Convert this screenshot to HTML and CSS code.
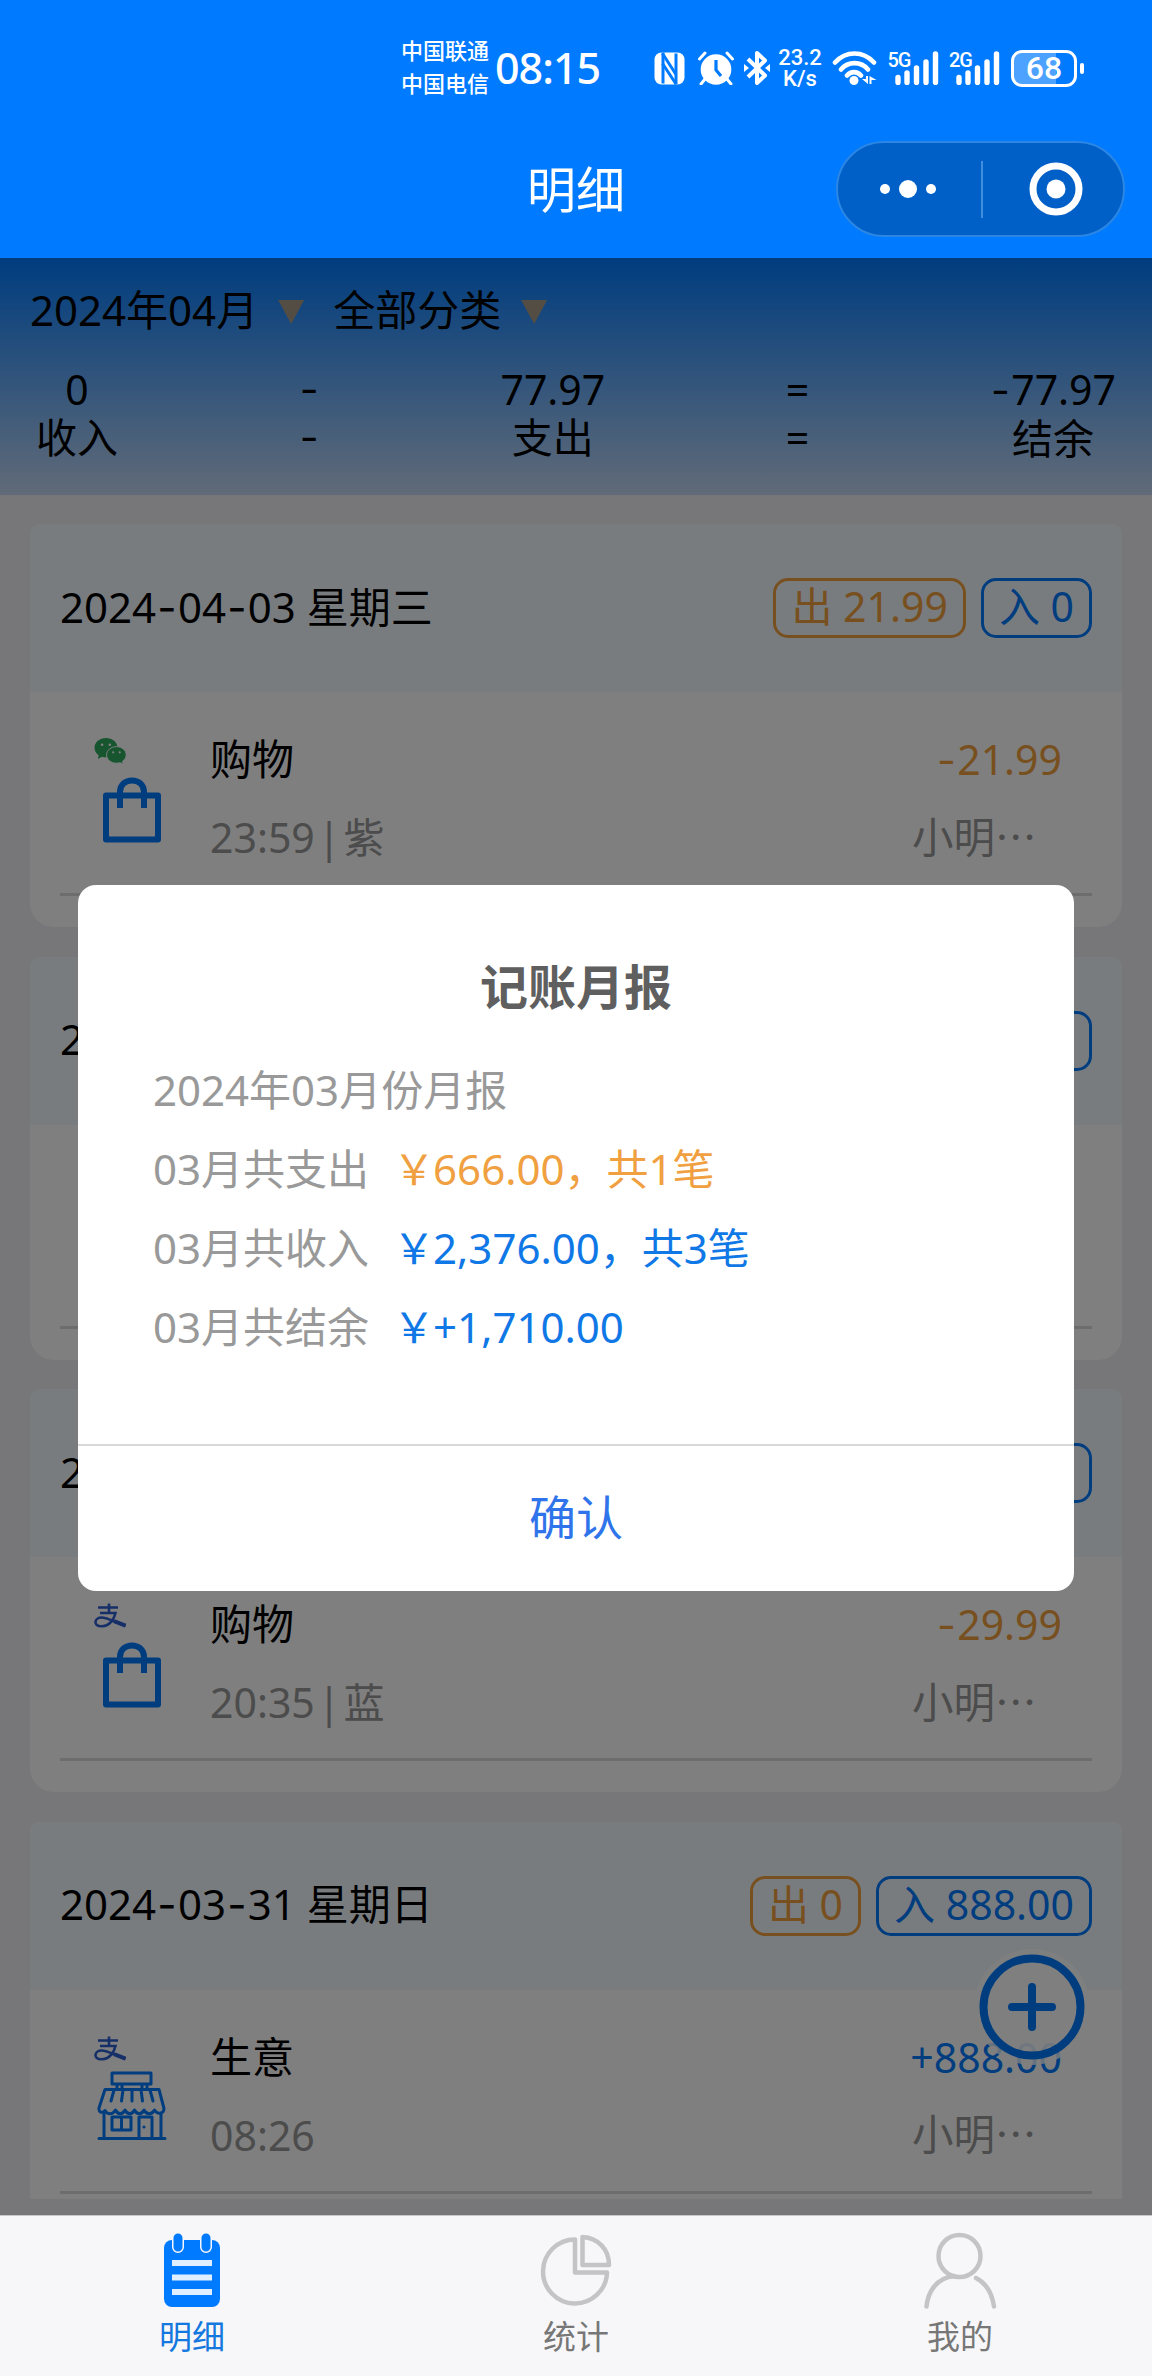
FILE: index.html
```html
<!DOCTYPE html>
<html lang="zh-CN">
<head>
<meta charset="utf-8">
<title>明细</title>
<link rel="stylesheet" href="styles.css">
</head>
<body>
<svg class="defs" width="0" height="0" aria-hidden="true">
  <symbol id="wechat" viewBox="0 0 32 26">
    <path fill="#2fab5f" d="M11.5 0C5 0 0 4.300 0 9.700c0 3 1.600 5.700 4.200 7.500L3.300 21l4.200-2.300c1.300.4 2.600.5 4 .5C18 19.200 23 15 23 9.700S18 0 11.500 0z"/>
    <path fill="#2fab5f" stroke="#fff" stroke-width="1" d="M22 8.600c-5.500 0-9.900 3.700-9.900 8.300s4.400 8.300 9.900 8.300c1.300 0 2.500-.2 3.600-.5l3.200 1.600-.8-3c2.200-1.500 3.700-3.800 3.700-6.400 0-4.600-4.300-8.300-9.700-8.300z"/>
    <g fill="#fff"><circle cx="7.600" cy="6.800" r="1.300"/><circle cx="15.300" cy="6.800" r="1.300"/><circle cx="18.700" cy="14.300" r="1.100"/><circle cx="25.200" cy="14.300" r="1.100"/></g>
  </symbol>
  <symbol id="alipay" viewBox="0 0 33 26">
    <g fill="none" stroke="#2f5fd0" stroke-width="2.600">
      <path d="M4 4.500h20M15 .5V10M6 10h15.500c-1.200 5-5 13-13.500 13.300C3 23.500 1.300 21 1.500 18.800c.3-2.500 2.800-4.300 6-4.300 6 0 12 4 24 8.500"/>
      <path stroke-width="4" d="M20 18.200l11.500 4.500"/>
    </g>
  </symbol>
  <symbol id="bag" viewBox="0 0 70 70">
    <g fill="none" stroke="#007aff" stroke-width="6" stroke-linejoin="round">
      <path d="M9 22.500h52v44H9zM23 35V19c0-15.500 24-15.500 24 0v16"/>
    </g>
  </symbol>
  <symbol id="shop" viewBox="0 0 70 70">
    <g fill="none" stroke="#007aff" stroke-width="3" stroke-linejoin="round" stroke-linecap="round">
      <path d="M15 2h39v11H15zM20 13v5M25 13v5M45 13v5M50 13v5M8 18.500h54l5 19c0 5-6 7-9.500 1.500-2.500 5-8 5-10.500 0-2.500 5-7 5-9.500 0-2.500 5-7 5-9.500 0-2.500 5-7 5-9.500 0C15.500 44 10.500 44 8 39.500 5 43 1.500 41 2 37z"/>
      <path d="M17 19l-3 11M26 19l-1.500 11M35 19v11M44 19l1.500 11M53 19l3 11M7 42v24M64 42v24M2 67.500h66M15 46h19v13H15zM24.500 46v13M42 67V46h13v21"/>
    </g>
    <circle cx="47" cy="56" r="1.600" fill="#007aff"/>
  </symbol>
  <symbol id="bars" viewBox="0 0 44 34">
    <g fill="none" stroke="#fff" stroke-width="5.400" stroke-linecap="round"><path d="M3 26.500v5M12 22v9.500M21.500 17v14.500M31 11v20.500M40.500 3v28.500"/></g>
  </symbol>
</svg>

<header class="header">
  <div class="status">
    <div class="carriers"><span>中国联通</span><span>中国电信</span></div>
    <div class="clock">08:15</div>
    <div class="status-icons">
      <svg class="nfc" width="31" height="33" viewBox="0 0 31 33"><rect x=".5" y=".5" width="30" height="32" rx="7" fill="#fff"/><path d="M9 .5v31M22 1.500v31" stroke="#007aff" stroke-width="3"/><path d="M8.500 1.500l13.500 21M8.500 11.500l13.500 20.500" stroke="#007aff" stroke-width="3"/></svg>
      <svg class="alarm" width="36" height="34" viewBox="0 0 36 34"><circle cx="18" cy="18.500" r="15.300" fill="#fff"/><path d="M18 9v10l5 6" fill="none" stroke="#007aff" stroke-width="3.200"/><path d="M1.500 8l5.500-6M34.500 8L29 2M7 28l-4 5M29 28l4 5" stroke="#fff" stroke-width="3" stroke-linecap="round"/></svg>
      <svg class="bt" width="26" height="34" viewBox="0 0 26 34"><path d="M4 8l17 16.500-8 7.500V2l8 7.500L4 26" fill="none" stroke="#fff" stroke-width="4" stroke-linejoin="round"/><path d="M0 13l5 4-5 4zM26 13l-5 4 5 4z" fill="#fff"/></svg>
      <div class="speed"><span>23.2</span><span>K/s</span></div>
      <svg class="wifi" width="45" height="34" viewBox="0 0 45 34"><g fill="none" stroke="#fff" stroke-width="4.600" stroke-linecap="round"><path d="M3 11.500C14-.5 31-.5 42 11.500M9 18.500c7-8.500 20-8.500 27 0M15 24.500c4-4.500 10-4.500 14 0"/></g><circle cx="22" cy="29.500" r="4.500" fill="#fff"/><path d="M36 25v8l-6-5h4v-3zM37.500 25v8h2v-4h5z" fill="#fff"/></svg>
      <div class="signal"><span>5G</span><svg width="44" height="34"><use href="#bars"/></svg></div>
      <div class="signal"><span>2G</span><svg width="44" height="34"><use href="#bars"/></svg></div>
      <div class="battery"><span>68</span></div>
      <div class="battery-cap"></div>
    </div>
  </div>
  <div class="navbar">
    <h1 class="nav-title">明细</h1>
    <div class="capsule">
      <svg width="143" height="92" viewBox="0 0 143 92"><g fill="#fff"><circle cx="47" cy="46" r="5"/><circle cx="70" cy="46" r="9"/><circle cx="93" cy="46" r="5"/></g></svg>
      <div class="capsule-line"></div>
      <svg width="140" height="92" viewBox="0 0 140 92"><circle cx="73" cy="46" r="23" fill="none" stroke="#fff" stroke-width="7"/><circle cx="73" cy="46" r="9.500" fill="#fff"/></svg>
    </div>
  </div>
</header>

<main class="page">
  <section class="summary">
    <div class="filters">
      <span>2024年04月</span><i class="caret"></i>
      <span>全部分类</span><i class="caret"></i>
    </div>
    <div class="totals">
      <div><span>0</span><span>收入</span></div>
      <div><span class="dash">-</span><span class="dash">-</span></div>
      <div><span>77.97</span><span>支出</span></div>
      <div><span>=</span><span>=</span></div>
      <div><span><b class="dash">-</b>77.97</span><span>结余</span></div>
    </div>
  </section>

  <section class="days">
    <article class="card">
      <div class="card-head">
        <h2>2024<b class="dash">-</b>04<b class="dash">-</b>03 星期三</h2>
        <span class="badge out">出 21.99</span><span class="badge in">入 0</span>
      </div>
      <div class="item">
        <div class="icons"><svg class="source"><use href="#wechat"/></svg><svg class="category"><use href="#bag"/></svg></div>
        <div class="info"><span class="kind">购物</span><span class="note">23:59<i class="bar">|</i>紫</span></div>
        <div class="amount"><span class="neg"><b class="dash">-</b>21.99</span><span class="note member">小明…</span></div>
      </div>
    </article>

    <article class="card">
      <div class="card-head">
        <h2>2024<b class="dash">-</b>04<b class="dash">-</b>02</h2>
        <span class="badge in">入 0</span>
      </div>
      <div class="item"></div>
    </article>

    <article class="card">
      <div class="card-head">
        <h2>2024<b class="dash">-</b>04<b class="dash">-</b>01</h2>
        <span class="badge in">入 0</span>
      </div>
      <div class="item">
        <div class="icons"><svg class="source"><use href="#alipay"/></svg><svg class="category"><use href="#bag"/></svg></div>
        <div class="info"><span class="kind">购物</span><span class="note">20:35<i class="bar">|</i>蓝</span></div>
        <div class="amount"><span class="neg"><b class="dash">-</b>29.99</span><span class="note member">小明…</span></div>
      </div>
    </article>

    <article class="card">
      <div class="card-head">
        <h2>2024<b class="dash">-</b>03<b class="dash">-</b>31 星期日</h2>
        <span class="badge out">出 0</span><span class="badge in">入 888.00</span>
      </div>
      <div class="item">
        <div class="icons"><svg class="source"><use href="#alipay"/></svg><svg class="category"><use href="#shop"/></svg></div>
        <div class="info"><span class="kind">生意</span><span class="note">08:26</span></div>
        <div class="amount"><span class="pos">+888.00</span><span class="note member">小明…</span></div>
      </div>
    </article>
  </section>

  <div class="fab"><svg width="106" height="106" viewBox="0 0 106 106"><g fill="none" stroke="#007aff" stroke-width="8" stroke-linecap="round"><circle cx="53" cy="53" r="48.500"/><path d="M53 33v40M33 53h40"/></g></svg></div>

  <div class="mask">
    <div class="modal">
      <h3>记账月报</h3>
      <div class="report">
        <p>2024年03月份月报</p>
        <p>03月共支出<span class="neg"><b class="yen">&#xFFE5;</b>666.00&#xFF0C;共1笔</span></p>
        <p>03月共收入<span class="pos"><b class="yen">&#xFFE5;</b>2,376.00&#xFF0C;共3笔</span></p>
        <p>03月共结余<span class="pos"><b class="yen">&#xFFE5;</b>+1,710.00</span></p>
      </div>
      <div class="confirm">确认</div>
    </div>
  </div>
</main>

<nav class="tabbar">
  <div class="tab active">
    <svg width="76" height="80" viewBox="0 0 76 80"><rect x="10" y="9" width="56" height="67" rx="8" fill="#007aff"/><g stroke-linecap="round"><path d="M24 7v9M52 7v9" stroke="#f7f7f9" stroke-width="12"/><path d="M24 7v9M52 7v9" stroke="#007aff" stroke-width="9"/></g><path d="M18 32h40M18 46.500h40M18 61h40" stroke="#e0efff" stroke-width="6"/></svg>
    <span>明细</span>
  </div>
  <div class="tab">
    <svg width="76" height="80" viewBox="0 0 76 80"><g fill="none" stroke="#c4c4c6" stroke-width="4.500" stroke-linejoin="round"><path d="M37 8.500a32 32 0 1 0 32 33H37zM44.500 6v28H71C71 18 60 7 44.500 6z"/></g></svg>
    <span>统计</span>
  </div>
  <div class="tab">
    <svg width="76" height="80" viewBox="0 0 76 80"><g fill="none" stroke="#c4c4c6" stroke-width="4.500" stroke-linecap="round"><circle cx="37.500" cy="25" r="21"/><path d="M4.500 75.500C6 60 15 47 32 45M54 47c10 5 16 15 18 28.500"/></g></svg>
    <span>我的</span>
  </div>
</nav>
</body>
</html>
```
FILE: styles.css
```css
* { box-sizing: border-box; margin: 0; padding: 0; }

body {
  width: 1152px;
  height: 2376px;
  display: flex;
  flex-direction: column;
  overflow: hidden;
  background: #efeff3;
  color: #000;
  font-family: "Noto Sans", "Noto Sans CJK SC", sans-serif;
  font-size: 41px;
  line-height: 56px;
}

svg { display: block; flex: none; }
.defs { position: absolute; }
h1, h2, h3, b { font-weight: 400; font-size: inherit; }
i { font-style: normal; }

.dash {
  display: inline-block;
  width: .52em;
  text-align: center;
  font-family: Inter, sans-serif;
}

/* header */
.header { height: 258px; background: #007aff; color: #fff; }
.status {
  height: 136px;
  padding-left: 401px;
  display: flex;
  align-items: center;
}
.carriers { display: flex; flex-direction: column; width: 94px; margin-top: -2px; font-size: 22px; font-weight: 500; line-height: 33px; }
.clock { width: 159px; font-size: 43px; font-weight: 500; line-height: 60px; letter-spacing: -1px; }
.status-icons { display: flex; align-items: center; }
.alarm { margin-left: 13px; }
.bt { margin-left: 10px; }
.speed {
  width: 44px;
  margin-left: 8px;
  display: flex;
  flex-direction: column;
  align-items: center;
  font: 500 22px/21px Roboto, sans-serif;
}
.wifi { margin-left: 10px; }
.signal { position: relative; margin-left: 17.500px; }
.signal span {
  position: absolute;
  left: -7px;
  top: -3px;
  font: 500 20px/24px Roboto, sans-serif;
  letter-spacing: -1px;
}
.battery {
  width: 66px;
  height: 37px;
  margin-left: 11px;
  border: 3px solid #fff;
  border-radius: 11px;
  background: linear-gradient(90deg, #4da1ff 70%, transparent 70%);
  text-align: center;
  font: 500 32px/31px Roboto, sans-serif;
}
.battery-cap { width: 4px; height: 11px; margin-left: 3px; border-radius: 2px; background: #fff; }

.navbar {
  height: 106px;
  display: grid;
  grid-template-columns: 1fr auto 1fr;
  align-items: center;
  padding-right: 27px;
  padding-left: 27px;
}
.nav-title { grid-column: 2; font-size: 49px; line-height: 70px; }
.capsule {
  grid-column: 3;
  justify-self: end;
  width: 289px;
  height: 96px;
  display: flex;
  align-items: center;
  border: 2px solid #2b86e4;
  border-radius: 48px;
  background: #0060c8;
}
.capsule-line { width: 2px; height: 57px; background: #3f8dde; }

/* page */
.page { position: relative; height: 1957px; overflow: hidden; }
.summary {
  height: 237px;
  padding: 24px 36px 0;
  background: linear-gradient(#007aff, #c2d6f0);
}
.filters { display: flex; align-items: center; margin-left: -6px; font-size: 42px; }
.caret {
  width: 26px;
  height: 24px;
  margin: 4px 29px 0 20px;
  background: #a89a88;
  clip-path: polygon(0 0, 100% 0, 50% 100%);
}
.totals { display: flex; justify-content: space-between; margin-top: 27px; line-height: 48px; }
.totals > div { display: flex; flex-direction: column; align-items: center; }

.days { height: 1704px; padding: 29px 30px 0; overflow: hidden; display: flex; flex-direction: column; gap: 29.500px; }
.card { flex: none; height: 403px; border-radius: 10px 10px 24px 24px; overflow: hidden; background: #fff; }
.card-head {
  height: 168px;
  padding: 0 30px;
  display: flex;
  align-items: center;
  gap: 15px;
  background: #f2f9ff;
}
.card-head h2 { flex: 1; padding-bottom: 2px; font-size: 42px; }
.kind { font-size: 42px; }
.badge {
  height: 60px;
  padding: 0 15px;
  border: 3px solid;
  border-radius: 15px;
  line-height: 50px;
}
.out, .neg { color: #f0a040; }
.in, .pos { color: #007aff; }

.item {
  height: 204px;
  margin: 0 30px;
  display: flex;
  border-bottom: 3px solid #dadada;
}
.icons { width: 150px; padding: 46px 0 0 34px; }
.source { width: 33px; height: 26px; }
.category { width: 70px; height: 70px; margin: 9px 0 0 3px; }
.info, .amount { display: flex; flex-direction: column; gap: 22px; padding-top: 39px; }
.info { flex: 1; }
.note { color: #989898; }
.bar { margin: 0 3px; }
.amount { width: 180px; padding-right: 30px; white-space: nowrap; }
.amount .neg, .amount .pos { align-self: flex-end; }
.member { margin-top: -3px; font-family: "Noto Sans CJK SC", sans-serif; font-size: 41.500px; }

.fab {
  position: absolute;
  right: 67px;
  top: 1696px;
  border-radius: 50%;
  background: rgba(255, 255, 255, .88);
  box-shadow: 0 0 0 5px rgba(255, 255, 255, .8);
}

/* dialog */
.mask {
  position: absolute;
  inset: 0;
  padding-top: 2px;
  display: flex;
  align-items: center;
  justify-content: center;
  background: rgba(0, 0, 0, .5);
}
.modal {
  width: 996px;
  height: 706px;
  display: flex;
  flex-direction: column;
  border-radius: 18px;
  background: #fff;
}
.modal h3 {
  padding-top: 67px;
  text-align: center;
  font-size: 48px;
  font-weight: 700;
  line-height: 70px;
  color: #5f5f5f;
}
.report { flex: 1; padding: 28px 74px 0 75px; font-size: 42px; line-height: 79px; color: #999; }
.report span { margin-left: 24px; }
.yen { margin-right: -2px; }
.report .neg { color: #f0a040; }
.report .pos { color: #0f78e6; }
.confirm {
  height: 147px;
  border-top: 2px solid #d8d8d8;
  text-align: center;
  font-size: 47px;
  line-height: 142px;
  color: #2f74ea;
}

/* tab bar */
.tabbar {
  flex: 1;
  display: grid;
  grid-template-columns: repeat(3, 1fr);
  border-top: 1px solid #c8c8ca;
  background: #f7f7f9;
}
.tab {
  display: flex;
  flex-direction: column;
  align-items: center;
  padding-top: 15px;
  font-size: 33px;
  line-height: 46px;
  color: #777;
}
.tab span { margin-top: 3px; }
.tab.active { color: #1478de; }
```
